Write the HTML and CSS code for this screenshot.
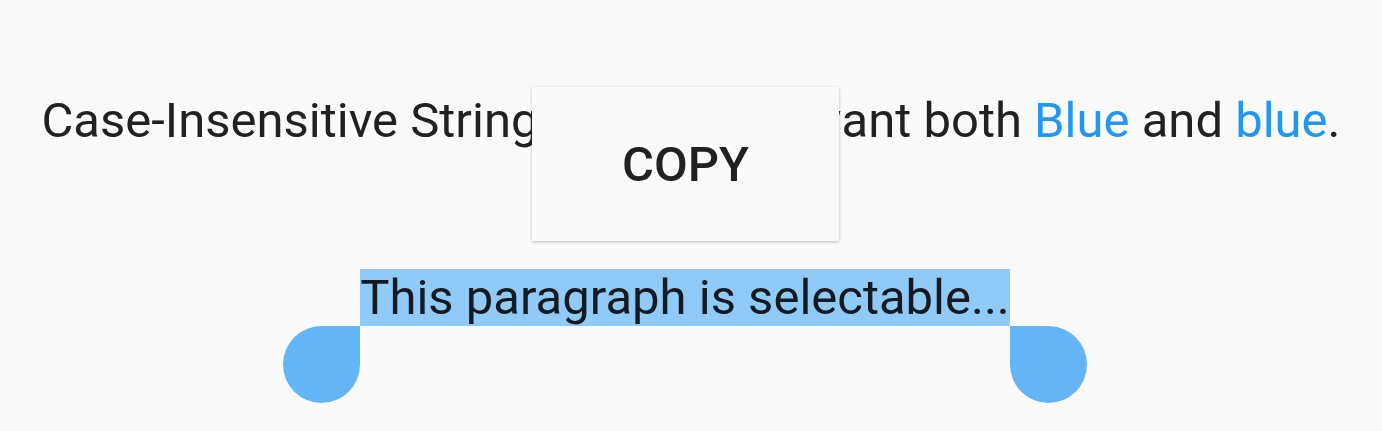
FILE: index.html
```html
<!DOCTYPE html>
<html>
<head>
<meta charset="utf-8">
<link rel="stylesheet" href="styles.css">
</head>
<body>
<main class="page">
  <p class="title">Case-Insensitive String Matching: I want both <span class="hl">Blue</span> and <span class="hl">blue</span>.</p>
  <p class="para"><span class="sel">This paragraph is selectable...<span class="handle left"></span><span class="handle right"></span></span></p>
  <div class="toolbar"><span class="copy">COPY</span></div>
</main>
</body>
</html>
```
FILE: styles.css
```css
html, body {
  margin: 0;
  padding: 0;
  background: #fafafa;
}
.page {
  position: relative;
  width: 1382px;
  height: 431px;
  display: flex;
  flex-direction: column;
  align-items: center;
  font-family: Roboto, "Liberation Sans", sans-serif;
  color: #212121;
}
.title {
  margin: 92px 0 0 0;
  font-size: 49px;
  line-height: 57px;
  white-space: nowrap;
}
.hl { color: #2196f3; }
.para {
  margin: 120px 12px 0 0;
  font-size: 49px;
  line-height: 57px;
  white-space: nowrap;
}
.sel {
  position: relative;
  display: inline-block;
  background: #90caf9;
  color: #141a20;
}
.handle {
  position: absolute;
  top: 57px;
  width: 77px;
  height: 77px;
  background: #64b5f6;
}
.handle.left {
  left: -77px;
  border-radius: 50% 0 50% 50%;
}
.handle.right {
  right: -77px;
  border-radius: 0 50% 50% 50%;
}
.toolbar {
  position: absolute;
  left: 532px;
  top: 87px;
  width: 307px;
  height: 154px;
  background: #fafafa;
  box-shadow: 0 1px 3px rgba(0,0,0,0.25);
  display: flex;
  align-items: center;
  justify-content: center;
}
.copy {
  font-size: 49px;
  font-weight: 500;
  color: #212121;
}
```
